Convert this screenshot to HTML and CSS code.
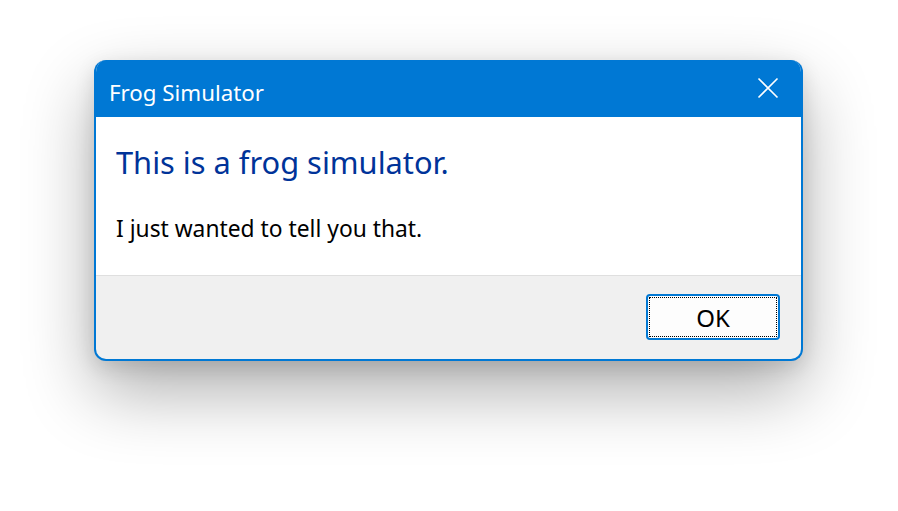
FILE: index.html
```html
<!DOCTYPE html>
<html>
<head>
<meta charset="utf-8">
<link rel="stylesheet" href="styles.css">
</head>
<body>
<div class="dialog">
  <div class="titlebar">
    <span class="title">Frog Simulator</span>
    <svg class="close" width="22" height="22" viewBox="0 0 22 22"><path d="M1.5 1.5 L20.5 20.5 M20.5 1.5 L1.5 20.5" stroke="#fff" stroke-width="1.6" fill="none"/></svg>
  </div>
  <div class="content">
    <div class="heading">This is a frog simulator.</div>
    <div class="message">I just wanted to tell you that.</div>
  </div>
  <div class="footer">
    <button class="ok"><span class="focus">OK</span></button>
  </div>
</div>
</body>
</html>
```
FILE: styles.css
```css
html, body { margin: 0; background: #fff; height: 100%; }
body { padding: 60px 0 0 94px; box-sizing: border-box; font-family: "Noto Sans", "Open Sans", sans-serif; }
.dialog {
  width: 709px;
  height: 301px;
  box-sizing: border-box;
  border: 2px solid #0078d4;
  border-top: none;
  border-radius: 12px;
  overflow: hidden;
  display: flex;
  flex-direction: column;
  background: #f0f0f0;
  box-shadow: 0 30px 70px rgba(0,0,0,0.32), 0 6px 20px rgba(0,0,0,0.12);
}
.titlebar {
  height: 57px;
  background: #0078d4;
  display: flex;
  align-items: center;
  justify-content: space-between;
  padding: 0 22px 0 15px;
  margin: 0 -2px;
  color: #fff;
  flex: none;
}
.title { font-size: 22.3px; padding-top: 7px; }
.close { display: block; margin-right: 2px; margin-top: -1px; }
.content {
  background: #fff;
  height: 159px;
  box-sizing: border-box;
  border-bottom: 1px solid #dfdfdf;
  padding: 25px 20px 0 20px;
  flex: none;
}
.heading { color: #003399; font-size: 30.8px; line-height: 40px; }
.message { color: #000; font-size: 22.8px; line-height: 28px; margin-top: 33px; }
.footer {
  flex: 1;
  display: flex;
  justify-content: flex-end;
  align-items: flex-start;
  padding: 18px 21px 0 0;
}
.ok {
  width: 134px;
  height: 46px;
  box-sizing: border-box;
  border: 2px solid #0078d4;
  border-radius: 4px;
  background: #fdfdfd;
  padding: 1px;
  font-family: inherit;
  display: flex;
}
.focus {
  flex: 1;
  border: 1px dotted #000;
  display: flex;
  align-items: center;
  justify-content: center;
  font-size: 24px;
  color: #000;
}
```
